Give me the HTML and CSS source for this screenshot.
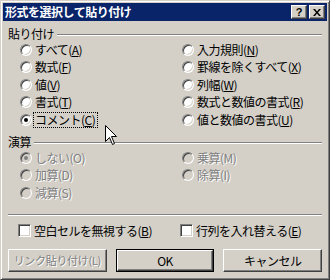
FILE: index.html
```html
<!DOCTYPE html>
<html lang="ja">
<head>
<meta charset="utf-8">
<link rel="stylesheet" href="styles.css">
</head>
<body>
<div class="dialog">
  <div class="titlebar">
    <span class="title">形式を選択して貼り付け</span>
    <div class="tbtns">
      <span class="tbtn help">?</span>
      <span class="tbtn close"><svg width="8" height="7" viewBox="0 0 8 7"><path d="M0 0h2l2 2.5L6 0h2L5 3.5 8 7H6L4 4.5 2 7H0l3-3.5z" fill="#000"/></svg></span>
    </div>
  </div>
  <div class="body">
    <div class="group-head"><span>貼り付け</span><i class="groove"></i></div>
    <div class="options rows5">
      <label class="opt"><span class="radio"></span><span>すべて(<u>A</u>)</span></label>
      <label class="opt"><span class="radio"></span><span>数式(<u>F</u>)</span></label>
      <label class="opt"><span class="radio"></span><span>値(<u>V</u>)</span></label>
      <label class="opt"><span class="radio"></span><span>書式(<u>T</u>)</span></label>
      <label class="opt"><span class="radio checked"></span><span class="focus">コメント(<u>C</u>)</span></label>
      <label class="opt"><span class="radio"></span><span>入力規則(<u>N</u>)</span></label>
      <label class="opt"><span class="radio"></span><span>罫線を除くすべて(<u>X</u>)</span></label>
      <label class="opt"><span class="radio"></span><span>列幅(<u>W</u>)</span></label>
      <label class="opt"><span class="radio"></span><span>数式と数値の書式(<u>R</u>)</span></label>
      <label class="opt"><span class="radio"></span><span>値と数値の書式(<u>U</u>)</span></label>
    </div>
    <div class="group-head op"><span>演算</span><i class="groove"></i></div>
    <div class="options rows3 disabled">
      <label class="opt"><span class="radio checked"></span><span>しない(O)</span></label>
      <label class="opt"><span class="radio"></span><span>加算(D)</span></label>
      <label class="opt"><span class="radio"></span><span>減算(S)</span></label>
      <label class="opt"><span class="radio"></span><span>乗算(M)</span></label>
      <label class="opt"><span class="radio"></span><span>除算(I)</span></label>
    </div>
    <div class="sep"></div>
    <div class="checks">
      <label class="opt"><span class="check"></span><span>空白セルを無視する(<u>B</u>)</span></label>
      <label class="opt"><span class="check"></span><span>行列を入れ替える(<u>E</u>)</span></label>
    </div>
    <div class="buttons">
      <span class="btn dis">リンク貼り付け(L)</span>
      <span class="btn default"><span class="in">OK</span></span>
      <span class="btn">キャンセル</span>
    </div>
  </div>
  <svg class="cursor" width="13" height="21" viewBox="0 0 13 21"><path d="M0.5 0.5V16.5L4.5 12.5L7.5 19.5L9.5 18.5L6.5 11.5H11.5Z" fill="#fff" stroke="#000" stroke-linejoin="miter"/></svg>
</div>
</body>
</html>
```

FILE: styles.css
```css
html, body {
  margin: 0;
  padding: 0;
  background: #d4d0c8;
}
.dialog {
  position: relative;
  width: 330px;
  height: 280px;
  box-sizing: border-box;
  background: #d4d0c8;
  border: 1px solid;
  border-color: #d4d0c8 #404040 #404040 #d4d0c8;
  box-shadow: inset 1px 1px #fff, inset -1px -1px #808080;
  padding: 2px;
  font-family: "Noto Sans CJK JP", sans-serif;
  font-size: 12px;
  letter-spacing: -0.5px;
  color: #000;
  overflow: hidden;
}
.titlebar {
  height: 18px;
  background: #0a246a;
  display: flex;
  align-items: center;
  justify-content: space-between;
  padding: 0 2px;
}
.title {
  color: #fff;
  font-weight: bold;
  line-height: 18px;
}
.tbtns {
  display: flex;
  gap: 2px;
}
.tbtn {
  width: 16px;
  height: 14px;
  box-sizing: border-box;
  background: #d4d0c8;
  border: 1px solid;
  border-color: #fff #404040 #404040 #fff;
  box-shadow: inset -1px -1px #808080;
  display: flex;
  align-items: center;
  justify-content: center;
}
.help {
  font-family: "Liberation Sans", sans-serif;
  font-weight: bold;
  font-size: 11px;
  letter-spacing: 0;
  line-height: 12px;
}
.body {
  padding: 0 5px;
}
.group-head {
  display: flex;
  align-items: center;
  gap: 3px;
  height: 14px;
  line-height: 14px;
  margin-top: 6px;
}
.group-head.op {
  margin-top: 6.5px;
}
.groove {
  flex: 1;
  border-top: 1px solid #808080;
  border-bottom: 1px solid #fff;
  height: 0;
  margin-top: 1px;
}
.options {
  display: grid;
  grid-auto-flow: column;
  grid-template-columns: 162px 1fr;
  padding-left: 12px;
}
.rows5 {
  grid-template-rows: repeat(5, 17.5px);
}
.rows3 {
  grid-template-rows: repeat(3, 17.5px);
}
.opt {
  display: flex;
  align-items: center;
  gap: 3px;
  white-space: nowrap;
  line-height: 14px;
}
.radio {
  position: relative;
  width: 12px;
  height: 12px;
  box-sizing: border-box;
  flex: none;
  border-radius: 50%;
  border: 1px solid;
  border-color: #808080 #fff #fff #808080;
  box-shadow: inset 1px 1px #404040, inset -1px -1px #d4d0c8;
  background: #fff;
}
.radio.checked::after {
  content: "";
  position: absolute;
  left: 3px;
  top: 3px;
  width: 4px;
  height: 4px;
  border-radius: 50%;
  background: #000;
}
.disabled .opt {
  color: #808080;
  text-shadow: 1px 1px #fff;
}
.disabled .radio {
  background: #d4d0c8;
}
.disabled .radio.checked::after {
  background: #808080;
}
.focus {
  outline: 1px dotted #000;
  outline-offset: 0;
  padding: 0 2px 0 1px;
  margin-left: -1px;
}
.sep {
  margin-top: 12px;
  border-top: 1px solid #808080;
  border-bottom: 1px solid #fff;
}
.checks {
  display: grid;
  grid-template-columns: 162px 1fr;
  padding-left: 10px;
  height: 18px;
  margin-top: 6px;
}
.check {
  width: 13px;
  height: 13px;
  box-sizing: border-box;
  flex: none;
  background: #fff;
  border: 1px solid;
  border-color: #808080 #fff #fff #808080;
  box-shadow: inset 1px 1px #404040, inset -1px -1px #d4d0c8;
}
.buttons {
  display: flex;
  gap: 9px;
  margin-top: 9px;
}
.btn {
  flex: 1 1 0;
  min-width: 0;
  height: 23px;
  box-sizing: border-box;
  border: 1px solid;
  border-color: #fff #404040 #404040 #fff;
  box-shadow: inset -1px -1px #808080;
  display: flex;
  align-items: center;
  justify-content: center;
  white-space: nowrap;
}
.btn.dis {
  color: #808080;
  text-shadow: 1px 1px #fff;
  font-size: 11px;
  letter-spacing: -0.3px;
}
.btn.default {
  border: 1px solid #000;
  box-shadow: none;
  padding: 0;
}
.btn.default .in {
  align-self: stretch;
  flex: 1;
  display: flex;
  align-items: center;
  justify-content: center;
  border: 1px solid;
  border-color: #fff #404040 #404040 #fff;
  box-shadow: inset -1px -1px #808080;
}
.cursor {
  position: absolute;
  left: 104px;
  top: 124px;
}
```
